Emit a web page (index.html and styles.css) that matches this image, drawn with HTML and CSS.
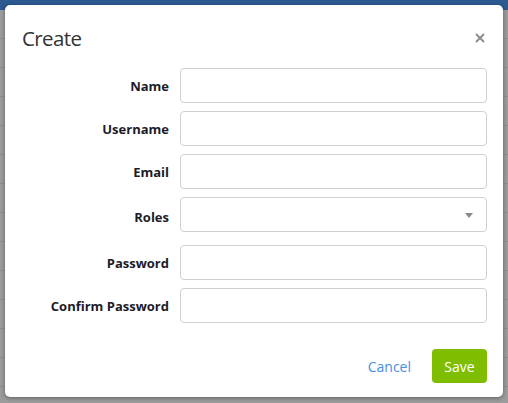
FILE: index.html
```html
<!DOCTYPE html>
<html>
<head>
<meta charset="utf-8">
<link rel="stylesheet" href="styles.css">
</head>
<body>
<div class="page">
  <div class="topbar"></div>
  <div class="rows">
    <div class="row"></div><div class="row"></div><div class="row"></div><div class="row"></div>
    <div class="row"></div><div class="row"></div><div class="row"></div><div class="row"></div>
    <div class="row"></div><div class="row"></div><div class="row"></div><div class="row"></div>
    <div class="row"></div><div class="row"></div>
  </div>
</div>
<div class="modal">
  <div class="modal-header">
    <h4 class="modal-title">Create</h4>
    <button class="close" aria-label="Close">
      <svg width="10" height="10" viewBox="0 0 10 10"><path d="M1 1 L9 9 M9 1 L1 9" stroke="#8a8a8a" stroke-width="1.8" fill="none"/></svg>
    </button>
  </div>
  <form class="form">
    <label class="lbl">Name</label><div class="field"><input class="ctl" type="text"></div>
    <label class="lbl">Username</label><div class="field"><input class="ctl" type="text"></div>
    <label class="lbl">Email</label><div class="field"><input class="ctl" type="text"></div>
    <label class="lbl">Roles</label><div class="field select-field"><div class="ctl select"><span class="caret"></span></div></div>
    <label class="lbl">Password</label><div class="field"><input class="ctl" type="password"></div>
    <label class="lbl">Confirm Password</label><div class="field"><input class="ctl" type="password"></div>
  </form>
  <div class="modal-footer">
    <a class="cancel">Cancel</a>
    <button class="save">Save</button>
  </div>
</div>
</body>
</html>
```
FILE: styles.css
```css
html, body {
  margin: 0;
  padding: 0;
}
body {
  width: 508px;
  height: 403px;
  overflow: hidden;
  background: #9c9c9c;
  font-family: "Open Sans", "Noto Sans", sans-serif;
  position: relative;
}
.page {
  height: 403px;
}
.topbar {
  height: 10px;
  background: #2c5a91;
}
.rows {
  display: flex;
  flex-direction: column;
}
.row {
  height: 28px;
  border-bottom: 1px solid #8e8e8e;
}
.modal {
  position: absolute;
  left: 5px;
  top: 5px;
  width: 498px;
  height: 392px;
  background: #fff;
  border-radius: 5px;
  box-shadow: 0 1px 4px rgba(0,0,0,0.4);
  display: flex;
  flex-direction: column;
}
.modal-header {
  display: flex;
  align-items: center;
  justify-content: space-between;
  padding: 18px 18px 0 17px;
  height: 30px;
}
.modal-title {
  margin: 0;
  font-weight: 400;
  font-size: 20.5px;
  letter-spacing: -0.6px;
  color: #333;
  line-height: 30px;
}
.close {
  border: 0;
  background: none;
  padding: 0;
  width: 10px;
  height: 10px;
  display: flex;
  margin-top: -1px;
}
.form {
  display: grid;
  grid-template-columns: 164px 307px;
  column-gap: 11px;
  row-gap: 8px;
  margin-top: 15px;
}
.lbl {
  text-align: right;
  font-weight: 700;
  font-size: 13px;
  color: #1c1c28;
  align-self: center;
}
.ctl {
  box-sizing: border-box;
  width: 307px;
  height: 35px;
  border: 1px solid #ccd0d5;
  border-radius: 4px;
  display: block;
  margin: 0;
  padding: 0 10px;
  background: #fff;
}
.select {
  position: relative;
}
.select-field {
  margin-bottom: 5px;
}
.caret {
  position: absolute;
  right: 13px;
  top: 15px;
  width: 0;
  height: 0;
  border-left: 4px solid transparent;
  border-right: 4px solid transparent;
  border-top: 5px solid #8a8a8a;
}
.modal-footer {
  display: flex;
  justify-content: flex-end;
  align-items: center;
  padding: 26px 16px 0 0;
}
.cancel {
  color: #4a8fe0;
  font-size: 14px;
  margin-right: 21px;
}
.save {
  width: 55px;
  height: 34px;
  border: 0;
  border-radius: 4px;
  background: #7fbd00;
  color: #fff;
  font-family: "Open Sans", "Noto Sans", sans-serif;
  font-size: 14px;
  padding: 0;
}
```
